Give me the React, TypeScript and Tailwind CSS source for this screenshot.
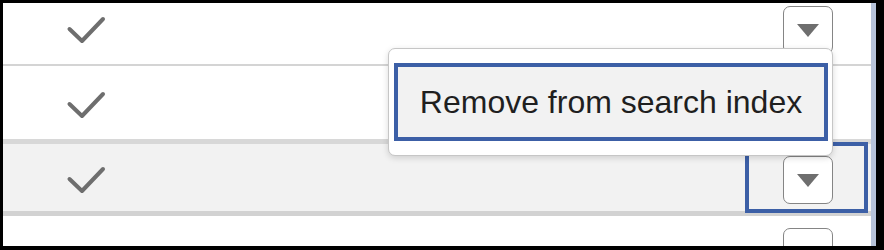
import React from "react";

function Check() {
  return (
    <svg width="40" height="28" viewBox="0 0 40 28" className="shrink-0">
      <polyline
        points="3.5,13 16,25 37,3"
        fill="none"
        stroke="#6e6e6e"
        strokeWidth="4"
        strokeLinecap="round"
        strokeLinejoin="round"
      />
    </svg>
  );
}

function DropButton() {
  return (
    <div className="w-[50px] h-[48px] shrink-0 rounded-[7px] border-[1.5px] border-[#858585] bg-white flex items-center justify-center">
      <svg width="22" height="13" viewBox="0 0 22 13">
        <polygon points="0,0 22,0 11,13" fill="#6e6e6e" />
      </svg>
    </div>
  );
}

export default function App() {
  return (
    <div
      className="w-[884px] h-[250px] bg-black pt-[3px] pl-[3px] pr-[8px] pb-[4px] flex"
      style={{ fontFamily: '"Liberation Sans", Arial, sans-serif' }}
    >
      <div className="relative flex-1 bg-white flex flex-col overflow-hidden">
        {/* Row 1 */}
        <div className="h-[63px] shrink-0 flex items-center pb-[7px] pl-[63px] pr-[38px] border-b-2 border-[#d4d4d4]">
          <Check />
          <div className="ml-auto">
            <DropButton />
          </div>
        </div>
        {/* Row 2 */}
        <div className="h-[73px] shrink-0 flex items-center pt-[5px] pl-[63px] pr-[38px]">
          <Check />
          <div className="ml-auto">
            <DropButton />
          </div>
        </div>
        <div className="h-[5px] shrink-0 bg-[#d8d8d8]" />
        {/* Row 3 (selected) */}
        <div className="relative h-[67px] shrink-0 flex items-center pt-[5px] pl-[63px] pr-[38px] bg-[#f2f2f2]">
          <Check />
          <div className="ml-auto">
            <DropButton />
          </div>
          <div className="absolute left-[742px] top-[-2px] w-[123px] h-[71px] border-[4px] border-[#3c5fa6]" />
        </div>
        <div className="h-[5px] shrink-0 bg-[#d2d2d2]" />
        {/* Row 4 */}
        <div className="flex-1 flex items-start pl-[63px] pr-[38px] overflow-hidden">
          <div className="mt-[30px]">
            <Check />
          </div>
          <div className="ml-auto mt-[12px]">
            <DropButton />
          </div>
        </div>

        {/* Popup menu */}
        <div className="absolute left-[385px] top-[45px] w-[445px] h-[108px] bg-white rounded-[7px] border border-[#c6c6c6] shadow-[0_2px_6px_rgba(0,0,0,0.15)] pl-[5px] pr-[4px] pt-[14px] pb-[14px] flex">
          <div className="flex-1 border-[4px] border-[#3c5fa6] bg-[#f2f2f2] flex items-center justify-center">
            <span className="text-[32px] leading-none text-[#1f1f1f]">Remove from search index</span>
          </div>
        </div>
      </div>
      <div className="w-[5px] bg-[#b7c3da]" />
    </div>
  );
}
